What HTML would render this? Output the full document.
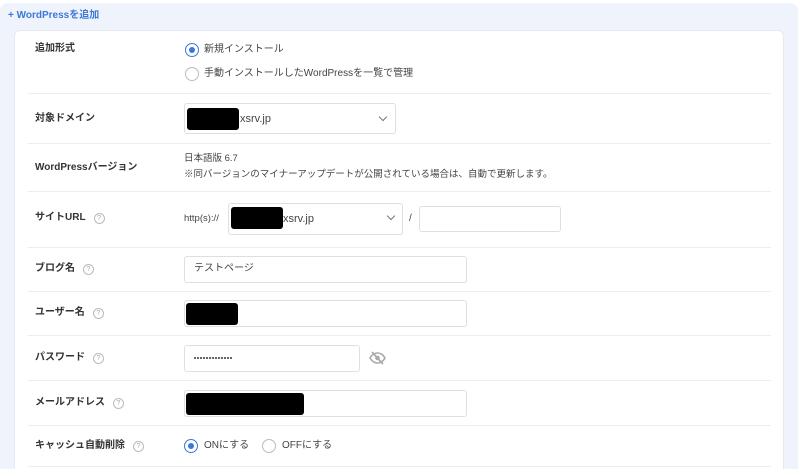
<!DOCTYPE html>
<html><head><meta charset="utf-8"><style>
*{box-sizing:border-box;margin:0;padding:0}
html,body{width:800px;height:469px;overflow:hidden}
body{background:#fff;font-family:"Liberation Sans","Noto Sans CJK JP",sans-serif;color:#333;position:relative}
.bg{position:absolute;left:0;top:3px;width:798px;height:466px;background:#eff3fb;border-radius:8px 8px 0 0}
.card{position:absolute;left:14px;top:30px;width:770px;height:439px;background:#fff;border-radius:6px 6px 0 0;border:1px solid #e6e9f0;border-bottom:none}
.a{position:absolute;white-space:nowrap;line-height:14px}
.lbl{font-size:10px;font-weight:bold;color:#333;left:35px}
.t{font-size:10px;color:#444}
.hr{position:absolute;left:28px;width:743px;height:1px;background:#ebedf0}
.box{position:absolute;border:1px solid #dcdfe4;border-radius:3px;background:#fff}
.q{display:inline-block;width:11px;height:11px;border:1px solid #bbb;border-radius:50%;font-size:7px;color:#aaa;text-align:center;line-height:9px;margin-left:8px;vertical-align:0px;font-weight:normal}
.r{position:absolute;width:14px;height:14px;border-radius:50%;border:1px solid #bbb;background:#fff}
.r.on{border:1.5px solid #3b78d8}
.r.on:after{content:"";position:absolute;left:2.5px;top:2.5px;width:6px;height:6px;border-radius:50%;background:#3b78d8}
.blk{position:absolute;background:#000;border-radius:3px}
.chev{position:absolute;width:6px;height:6px;border-right:1px solid #777;border-bottom:1px solid #777;transform:rotate(45deg)}
.dot{position:absolute;top:357px;width:2px;height:2px;border-radius:50%;background:#333}
</style></head><body>
<div class="bg"></div>
<div class="a" style="left:8px;top:9px;font-size:10px;font-weight:bold;color:#3b78d8">+ WordPressを追加</div>
<div class="card"></div>

<div class="a lbl" style="top:42px">追加形式</div>
<div class="r on" style="left:185px;top:43px"></div><div class="a t" style="left:204px;top:43px">新規インストール</div>
<div class="r" style="left:185px;top:67px"></div><div class="a t" style="left:204px;top:67px">手動インストールしたWordPressを一覧で管理</div>
<div class="hr" style="top:93px"></div>

<div class="a lbl" style="top:112px">対象ドメイン</div>
<div class="box" style="left:184px;top:103px;width:212px;height:31px"></div>
<div class="blk" style="left:187px;top:108px;width:52px;height:22px"></div>
<div class="a t" style="left:240px;top:112px;font-size:11px">xsrv.jp</div>
<div class="chev" style="left:380px;top:114px"></div>
<div class="hr" style="top:143px"></div>

<div class="a lbl" style="top:161px">WordPressバージョン</div>
<div class="a t" style="left:184px;top:152px;font-size:9.5px">日本語版 6.7</div>
<div class="a t" style="left:184px;top:168px;font-size:9.5px">※同バージョンのマイナーアップデートが公開されている場合は、自動で更新します。</div>
<div class="hr" style="top:191px"></div>

<div class="a lbl" style="top:211px">サイトURL<span class="q">?</span></div>
<div class="a t" style="left:184px;top:212px;font-size:9.5px">http(s)://</div>
<div class="box" style="left:228px;top:203px;width:175px;height:32px"></div>
<div class="blk" style="left:231px;top:207px;width:52px;height:22px"></div>
<div class="a t" style="left:283px;top:212px;font-size:11px">xsrv.jp</div>
<div class="chev" style="left:388px;top:213px"></div>
<div class="a t" style="left:409px;top:212px">/</div>
<div class="box" style="left:419px;top:206px;width:142px;height:26px"></div>
<div class="hr" style="top:247px"></div>

<div class="a lbl" style="top:262px">ブログ名<span class="q">?</span></div>
<div class="box" style="left:184px;top:256px;width:283px;height:27px"></div>
<div class="a t" style="left:194px;top:262px">テストページ</div>
<div class="hr" style="top:291px"></div>

<div class="a lbl" style="top:306px">ユーザー名<span class="q">?</span></div>
<div class="box" style="left:184px;top:300px;width:283px;height:27px"></div>
<div class="blk" style="left:186px;top:303px;width:52px;height:22px"></div>
<div class="hr" style="top:335px"></div>

<div class="a lbl" style="top:351px">パスワード<span class="q">?</span></div>
<div class="box" style="left:184px;top:345px;width:176px;height:27px"></div>
<div class="dot" style="left:194px"></div><div class="dot" style="left:197px"></div><div class="dot" style="left:200px"></div><div class="dot" style="left:203px"></div><div class="dot" style="left:206px"></div><div class="dot" style="left:209px"></div><div class="dot" style="left:212px"></div><div class="dot" style="left:215px"></div><div class="dot" style="left:218px"></div><div class="dot" style="left:221px"></div><div class="dot" style="left:224px"></div><div class="dot" style="left:227px"></div><div class="dot" style="left:230px"></div>
<svg class="a" style="left:369px;top:351px" width="17" height="14" viewBox="0 0 17 14"><path d="M1 7C3 3.5 5.5 2 8.5 2S14 3.5 16 7C14 10.5 11.5 12 8.5 12S3 10.5 1 7Z" fill="none" stroke="#aaa" stroke-width="1.6"/><circle cx="8.5" cy="7" r="2.3" fill="#aaa"/><path d="M3 1L14 13" stroke="#aaa" stroke-width="1.8"/></svg>
<div class="hr" style="top:380px"></div>

<div class="a lbl" style="top:396px">メールアドレス<span class="q">?</span></div>
<div class="box" style="left:184px;top:390px;width:283px;height:27px"></div>
<div class="blk" style="left:186px;top:393px;width:118px;height:22px"></div>
<div class="hr" style="top:425px"></div>

<div class="a lbl" style="top:439px">キャッシュ自動削除<span class="q">?</span></div>
<div class="r on" style="left:184px;top:439px"></div><div class="a t" style="left:204px;top:439px">ONにする</div>
<div class="r" style="left:262px;top:439px"></div><div class="a t" style="left:282px;top:439px">OFFにする</div>
<div class="hr" style="top:466px"></div>
</body></html>
